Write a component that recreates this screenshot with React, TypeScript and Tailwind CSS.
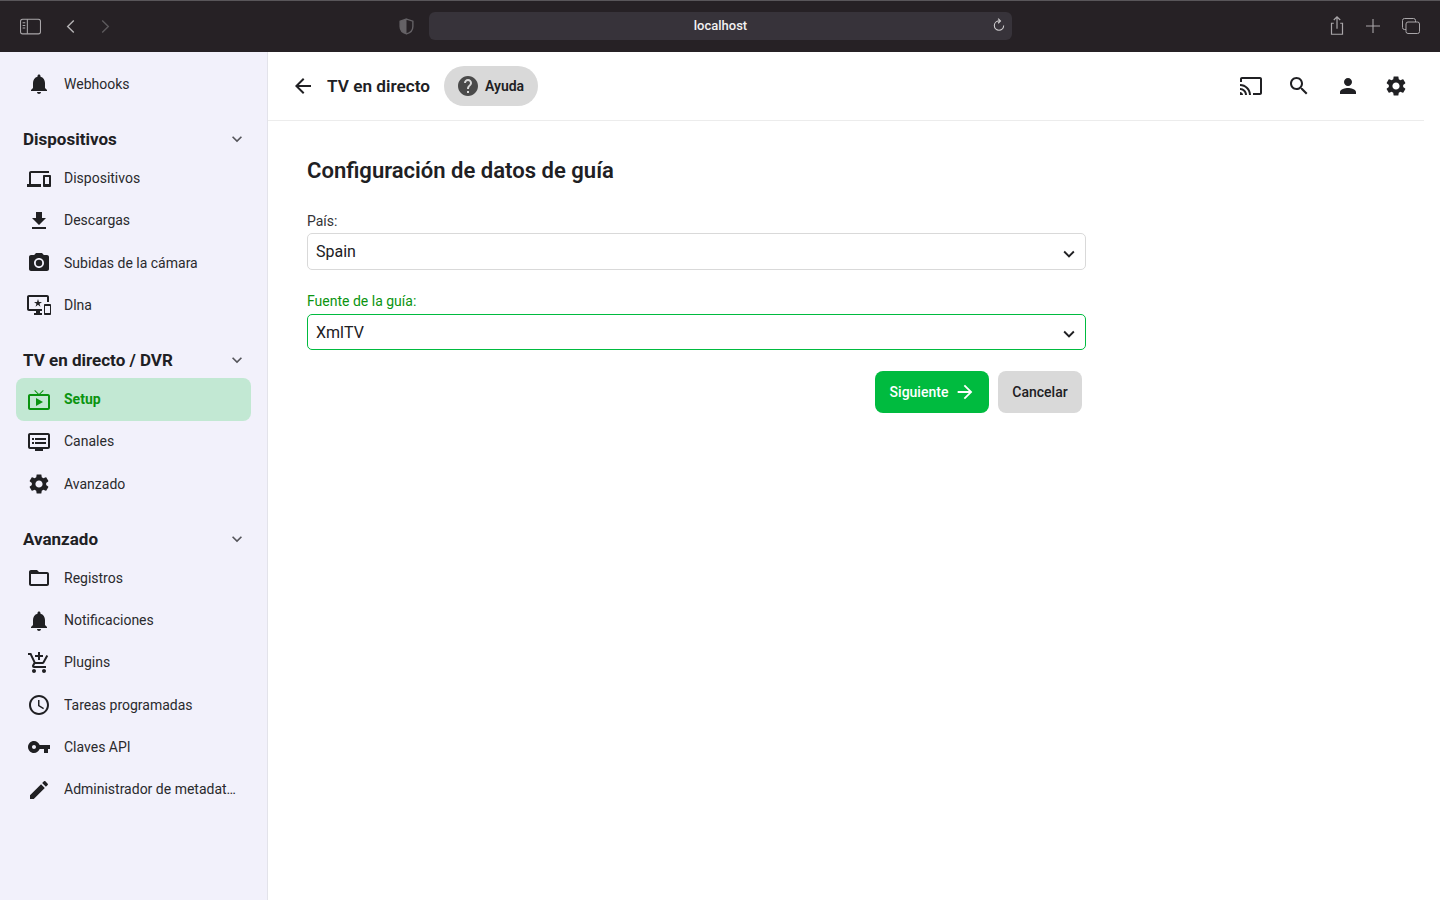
import { ReactNode } from "react";

const P = {
  bell: "M12 22c1.1 0 2-.9 2-2h-4c0 1.1.9 2 2 2zm6-6v-5c0-3.07-1.63-5.64-4.5-6.32V4c0-.83-.67-1.5-1.5-1.5s-1.5.67-1.5 1.5v.68C7.64 5.36 6 7.92 6 11v5l-2 2v1h16v-1l-2-2z",
  devices: "M4 6h18V4H4c-1.1 0-2 .9-2 2v11H0v3h14v-3H4V6zm19 2h-6c-.55 0-1 .45-1 1v10c0 .55.45 1 1 1h6c.55 0 1-.45 1-1V9c0-.55-.45-1-1-1zm-1 9h-4v-7h4v7z",
  download: "M19 9h-4V3H9v6H5l7 7 7-7zM5 18v2h14v-2H5z",
  camera: "M9 2L7.17 4H4c-1.1 0-2 .9-2 2v12c0 1.1.9 2 2 2h16c1.1 0 2-.9 2-2V6c0-1.1-.9-2-2-2h-3.17L15 2H9zm3 15c-2.76 0-5-2.24-5-5s2.24-5 5-5 5 2.24 5 5-2.24 5-5 5zm0-8.2a3.2 3.2 0 1 0 0 6.4 3.2 3.2 0 0 0 0-6.4z",
  dlna: "M23 11.01L18 11c-.55 0-1 .45-1 1v9c0 .55.45 1 1 1h5c.55 0 1-.45 1-1v-9c0-.55-.45-.99-1-.99zM23 20h-5v-7h5v7zM20 2H2C.89 2 0 2.89 0 4v12c0 1.1.89 2 2 2h7v2H7v2h8v-2h-2v-2h2v-2H2V4h18v5h2V4c0-1.11-.9-2-2-2zm-8.03 7L11 6l-.97 3H7l2.47 1.76-.94 2.91 2.47-1.8 2.47 1.8-.94-2.91L15 9h-3.03z",
  liveTv: "M21 6h-7.59l3.29-3.29L16 2l-4 4-4-4-.71.71L10.59 6H3c-1.1 0-2 .89-2 2v12c0 1.1.9 2 2 2h18c1.1 0 2-.9 2-2V8c0-1.11-.9-2-2-2zm0 14H3V8h18v12zM9 10v8l7-4z",
  dvr: "M21 3H3c-1.1 0-2 .9-2 2v12c0 1.1.9 2 2 2h5v2h8v-2h5c1.1 0 1.99-.9 1.99-2L23 5c0-1.1-.9-2-2-2zm0 14H3V5h18v12zm-2-9H8v2h11V8zm0 4H8v2h11v-2zM7 8H5v2h2V8zm0 4H5v2h2v-2z",
  settings: "M19.14 12.94c.04-.3.06-.61.06-.94 0-.32-.02-.64-.07-.94l2.03-1.58c.18-.14.23-.41.12-.61l-1.92-3.32c-.12-.22-.37-.29-.59-.22l-2.39.96c-.5-.38-1.03-.7-1.62-.94l-.36-2.54c-.04-.24-.24-.41-.48-.41h-3.84c-.24 0-.43.17-.47.41l-.36 2.54c-.59.24-1.13.57-1.62.94l-2.39-.96c-.22-.08-.47 0-.59.22L2.74 8.87c-.12.21-.08.47.12.61l2.03 1.58c-.05.3-.09.63-.09.94s.02.64.07.94l-2.03 1.58c-.18.14-.23.41-.12.61l1.92 3.32c.12.22.37.29.59.22l2.39-.96c.5.38 1.03.7 1.62.94l.36 2.54c.05.24.24.41.48.41h3.84c.24 0 .44-.17.47-.41l.36-2.54c.59-.24 1.13-.56 1.62-.94l2.39.96c.22.08.47 0 .59-.22l1.92-3.32c.12-.22.07-.47-.12-.61l-2.01-1.58zM12 15.6c-1.98 0-3.6-1.62-3.6-3.6s1.62-3.6 3.6-3.6 3.6 1.62 3.6 3.6-1.62 3.6-3.6 3.6z",
  folder: "M20 6h-8l-2-2H4c-1.1 0-1.99.9-1.99 2L2 18c0 1.1.9 2 2 2h16c1.1 0 2-.9 2-2V8c0-1.1-.9-2-2-2zm0 12H4V8h16v10z",
  cart: "M11 9h2V6h3V4h-3V1h-2v3H8v2h3v3zm-4 9c-1.1 0-1.99.9-1.99 2S5.9 22 7 22s2-.9 2-2-.9-2-2-2zm10 0c-1.1 0-1.99.9-1.99 2s.89 2 1.99 2 2-.9 2-2-.9-2-2-2zm-9.83-3.25l.03-.12.9-1.63h7.45c.75 0 1.41-.41 1.75-1.03l3.86-7.01L19.42 4h-.01l-1.1 2-2.76 5H8.53l-.13-.27L6.16 6l-.95-2-.94-2H1v2h2l3.6 7.59-1.35 2.45c-.16.28-.25.61-.25.96 0 1.1.9 2 2 2h12v-2H7.42c-.13 0-.25-.11-.25-.25z",
  schedule: "M11.99 2C6.47 2 2 6.48 2 12s4.47 10 9.99 10C17.52 22 22 17.52 22 12S17.52 2 11.99 2zM12 20c-4.42 0-8-3.58-8-8s3.58-8 8-8 8 3.58 8 8-3.58 8-8 8zm.5-13H11v6l5.25 3.15.75-1.23-4.5-2.67z",
  key: "M12.65 10C11.83 7.67 9.61 6 7 6c-3.31 0-6 2.69-6 6s2.69 6 6 6c2.61 0 4.83-1.67 5.65-4H17v4h4v-4h2v-4H12.65zM7 14c-1.1 0-2-.9-2-2s.9-2 2-2 2 .9 2 2-.9 2-2 2z",
  edit: "M3 17.25V21h3.75L17.81 9.94l-3.75-3.75L3 17.25zM20.71 7.04c.39-.39.39-1.02 0-1.41l-2.34-2.34c-.39-.39-1.02-.39-1.41 0l-1.83 1.83 3.75 3.75 1.83-1.83z",
  cast: "M21 3H3c-1.1 0-2 .9-2 2v3h2V5h18v14h-7v2h7c1.1 0 2-.9 2-2V5c0-1.1-.9-2-2-2zM1 18v3h3c0-1.66-1.34-3-3-3zm0-4v2c2.76 0 5 2.24 5 5h2c0-3.87-3.13-7-7-7zm0-4v2c4.97 0 9 4.03 9 9h2c0-6.08-4.93-11-11-11z",
  search: "M15.5 14h-.79l-.28-.27C15.41 12.59 16 11.11 16 9.5 16 5.91 13.09 3 9.5 3S3 5.91 3 9.5 5.91 16 9.5 16c1.61 0 3.09-.59 4.23-1.57l.27.28v.79l5 4.99L20.49 19l-4.99-5zm-6 0C7.01 14 5 11.99 5 9.5S7.01 5 9.5 5 14 7.01 14 9.5 11.99 14 9.5 14z",
  person: "M12 12c2.21 0 4-1.79 4-4s-1.79-4-4-4-4 1.79-4 4 1.79 4 4 4zm0 2c-2.67 0-8 1.34-8 4v2h16v-2c0-2.66-5.33-4-8-4z",
  back: "M20 11H7.83l5.59-5.59L12 4l-8 8 8 8 1.41-1.41L7.83 13H20v-2z",
  forward: "M12 4l-1.41 1.41L16.17 11H4v2h12.17l-5.58 5.59L12 20l8-8z",
  help: "M12 2C6.48 2 2 6.48 2 12s4.48 10 10 10 10-4.48 10-10S17.52 2 12 2zm1 17h-2v-2h2v2zm2.07-7.75l-.9.92C13.45 12.9 13 13.5 13 15h-2v-.5c0-1.1.45-2.1 1.17-2.83l1.24-1.26c.37-.36.59-.86.59-1.41 0-1.1-.9-2-2-2s-2 .9-2 2H8c0-2.21 1.79-4 4-4s4 1.79 4 4c0 .88-.36 1.68-.93 2.25z",
  chevron: "M7.41 8.59L12 13.17l4.59-4.58L18 10l-6 6-6-6 1.41-1.41z",
};

function Icon({ d, className = "w-6 h-6" }: { d: string; className?: string }) {
  return (
    <svg viewBox="0 0 24 24" fill="currentColor" className={className}>
      <path d={d} />
    </svg>
  );
}

function Stroke({ children, className }: { children: ReactNode; className: string }) {
  return (
    <svg viewBox="0 0 24 24" fill="none" stroke="currentColor" strokeWidth="1.2" className={className}>
      {children}
    </svg>
  );
}

function NavItem({ icon, label, active }: { icon: string; label: string; active?: boolean }) {
  return (
    <div
      className={`flex items-center h-[42.25px] rounded-lg pl-[11px] pr-[14px] ${
        active ? "bg-[#c2e8d3] text-[#0a9410] font-bold" : "text-[#2a2a2d]"
      }`}
    >
      <Icon d={icon} className={`w-6 h-6 shrink-0 ${active ? "text-[#0a9410]" : "text-[#202023]"}`} />
      <span className="ml-[13px] text-[14px] truncate">{label}</span>
    </div>
  );
}

function Group({ title, children }: { title: string; children: ReactNode }) {
  return (
    <section className="mt-4">
      <div className="flex items-center justify-between h-9 pl-[7px] pr-1">
        <h3 className="pt-[0.4px] text-[17px] font-bold text-[#202023]">{title}</h3>
        <Icon d={P.chevron} className="w-[20px] h-[20px] text-[#55555a]" />
      </div>
      {children}
    </section>
  );
}

function SelectBox({ value, focused }: { value: string; focused?: boolean }) {
  return (
    <div
      className={`flex items-center justify-between bg-white rounded-[5px] border pl-2 pr-[5px] h-[36.5px] text-[16px] text-[#202023] ${
        focused ? "border-[#00bb3f]" : "border-[#d9d9d9]"
      }`}
    >
      <span className="pt-[2px]">{value}</span>
      <Icon d={P.chevron} className="w-[22px] h-[22px] mt-[5px] text-[#202023]" />
    </div>
  );
}

export default function App() {
  return (
    <div className="w-[1440px] h-[900px] overflow-hidden flex flex-col bg-white font-['Roboto',sans-serif]">
      {/* safari toolbar */}
      <div className="h-[52px] shrink-0 flex items-center bg-[#262125] border-t border-[#59565a] pb-px text-[#a9a6a9]">
        <svg viewBox="0 0 20 16" fill="none" stroke="currentColor" strokeWidth="1" className="ml-[20px] w-[21px] h-[17px]">
          <rect x="0.5" y="1" width="19" height="14" rx="2" />
          <path d="M7 1v14M2.5 4.5h2.5M2.5 7h2.5M2.5 9.5h2.5" />
        </svg>
        <svg viewBox="0 0 10 16" fill="none" stroke="currentColor" strokeWidth="1.5" className="ml-[24px] w-[11px] h-[15px] text-[#b5b3b5]">
          <path d="M8.5 1.5L2 8l6.5 6.5" />
        </svg>
        <svg viewBox="0 0 10 16" fill="none" stroke="currentColor" strokeWidth="1.5" className="ml-[24px] w-[11px] h-[15px] text-[#5c595c]">
          <path d="M1.5 1.5L8 8l-6.5 6.5" />
        </svg>
        <svg viewBox="0 0 14 16" className="ml-[288px] w-[15px] h-[17px] text-[#656266]">
          <path d="M7 1l6 2v5c0 3.5-2.5 6-6 7-3.5-1-6-3.5-6-7V3z" fill="none" stroke="currentColor" strokeWidth="1.3" />
          <path d="M7 1L1 3v5c0 3.5 2.5 6 6 7z" fill="currentColor" />
        </svg>
        <div className="ml-[15px] w-[583px] h-[28px] rounded-md bg-[#37333a] flex items-center relative">
          <span className="w-full text-center text-[13px] font-medium text-[#f2f1f2] pb-px">localhost</span>
          <Stroke className="absolute right-[6px] top-[6px] w-[14px] h-[14px] text-[#cfcdcf]">
            <path d="M20 13a8 8 0 1 1-8-8h2" strokeWidth="1.9" />
            <path d="M10.5 1l4 4-4 4" strokeWidth="1.9" />
          </Stroke>
        </div>
        <div className="ml-auto flex items-center mr-[20px]">
          <Stroke className="w-[22px] h-[22px]">
            <path d="M8.5 9H6v12h12V9h-2.5M12 15V2M8.5 5.5L12 2l3.5 3.5" strokeWidth="1.3" />
          </Stroke>
          <Stroke className="ml-[18px] w-[14px] h-[14px]">
            <path d="M12 0v24M0 12h24" strokeWidth="1.9" />
          </Stroke>
          <svg viewBox="0 0 18 16" fill="none" stroke="currentColor" strokeWidth="1" className="ml-[22px] w-[18px] h-[16px]">
            <rect x="0.5" y="0.5" width="13" height="11" rx="2" />
            <rect x="4" y="4" width="13.5" height="11.5" rx="2" fill="#262125" />
          </svg>
        </div>
      </div>

      <div className="flex flex-1 min-h-0">
        {/* sidebar */}
        <aside className="w-[268px] shrink-0 bg-[#f2f1fb] border-r border-[#e3e3ea] pt-[11.15px] pl-4 pr-4">
          <NavItem icon={P.bell} label="Webhooks" />
          <Group title="Dispositivos">
            <NavItem icon={P.devices} label="Dispositivos" />
            <NavItem icon={P.download} label="Descargas" />
            <NavItem icon={P.camera} label="Subidas de la cámara" />
            <NavItem icon={P.dlna} label="Dlna" />
          </Group>
          <Group title="TV en directo / DVR">
            <NavItem icon={P.liveTv} label="Setup" active />
            <NavItem icon={P.dvr} label="Canales" />
            <NavItem icon={P.settings} label="Avanzado" />
          </Group>
          <Group title="Avanzado">
            <NavItem icon={P.folder} label="Registros" />
            <NavItem icon={P.bell} label="Notificaciones" />
            <NavItem icon={P.cart} label="Plugins" />
            <NavItem icon={P.schedule} label="Tareas programadas" />
            <NavItem icon={P.key} label="Claves API" />
            <NavItem icon={P.edit} label="Administrador de metadatos" />
          </Group>
        </aside>

        {/* main */}
        <main className="flex-1 min-w-0 pr-4 text-[#202023]">
          <header className="h-[69px] flex items-center border-b border-[#ececec] pl-[23px]">
            <Icon d={P.back} className="w-6 h-6" />
            <h1 className="ml-3 pt-px text-[17.2px] font-semibold">TV en directo</h1>
            <button className="ml-[14px] h-10 w-[94px] rounded-full bg-[#d9d9d9] flex items-center pl-[12px] text-[14px] font-semibold">
              <Icon d={P.help} className="w-[24px] h-[24px] text-[#4a4a4a]" />
              <span className="ml-[5px]">Ayuda</span>
            </button>
            <div className="ml-auto flex items-center gap-[24.33px] pr-[16px]">
              <Icon d={P.cast} className="w-6 h-6" />
              <Icon d={P.search} className="w-6 h-6" />
              <Icon d={P.person} className="w-6 h-6" />
              <Icon d={P.settings} className="w-6 h-6" />
            </div>
          </header>

          <div className="pl-[39px] pt-[35px] w-[818px]">
            <h2 className="text-[22.05px] leading-[30px] font-semibold">Configuración de datos de guía</h2>

            <div className="mt-[26px]">
              <label className="block text-[14px] leading-[18px] mb-[3px] text-[#333336]">País:</label>
              <SelectBox value="Spain" />
            </div>

            <div className="mt-[22px]">
              <label className="block text-[14px] leading-[18px] mb-[4px] text-[#0a9410]">Fuente de la guía:</label>
              <SelectBox value="XmlTV" focused />
            </div>

            <div className="flex justify-end gap-[9px] mt-[21px] pr-1">
              <button className="h-[42px] w-[114px] rounded-lg bg-[#00bb3f] text-white text-[14px] font-medium flex items-center justify-center pl-[2px]">
                Siguiente
                <Icon d={P.forward} className="ml-[6px] w-[22px] h-[22px]" />
              </button>
              <button className="h-[42px] w-[84px] rounded-lg bg-[#d9d9d9] text-[14px] font-medium text-[#202023]">
                Cancelar
              </button>
            </div>
          </div>
        </main>
      </div>
    </div>
  );
}
